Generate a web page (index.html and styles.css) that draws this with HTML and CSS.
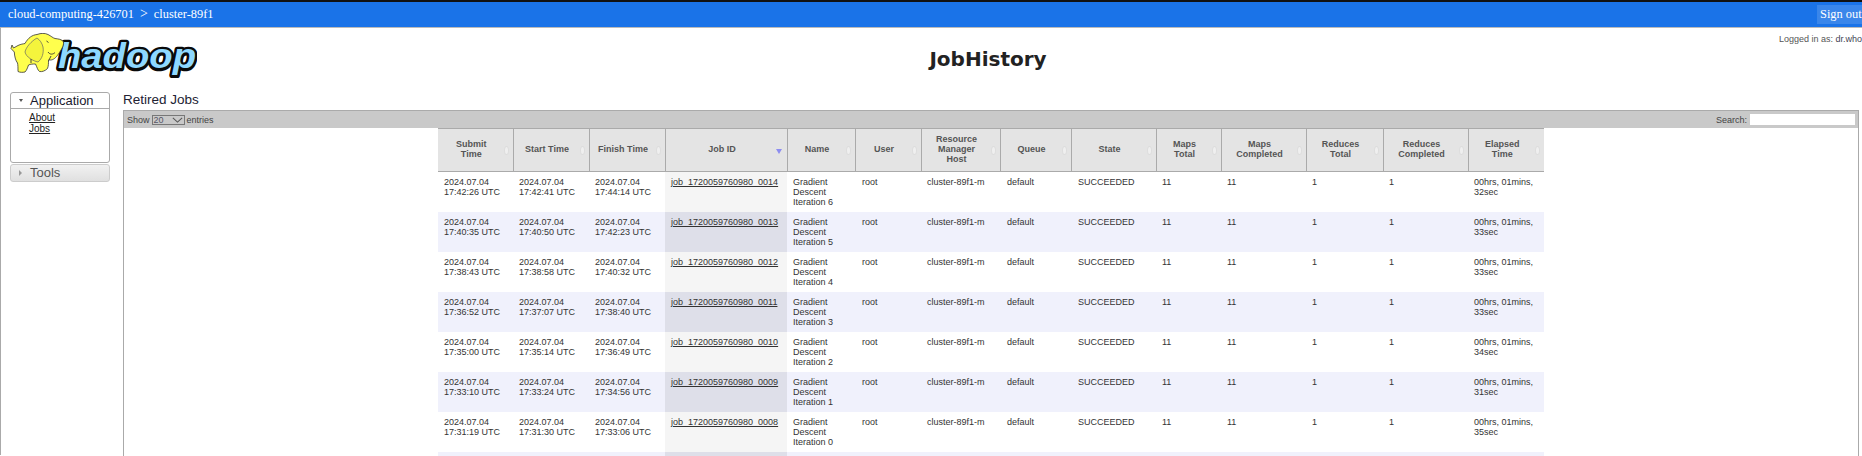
FILE: index.html
```html
<!DOCTYPE html>
<html lang="en">
<head>
<meta charset="utf-8">
<title>JobHistory</title>
<link rel="stylesheet" href="styles.css">
</head>
<body>
<div class="topstrip"></div>
<nav class="topbar">
  <div class="crumbs"><span>cloud-computing-426701</span><span class="sep">&gt;</span><span>cluster-89f1</span></div>
  <a class="signout">Sign out</a>
</nav>
<div class="page">
  <header class="header">
    <svg class="logo" viewBox="0 0 187 45" width="187" height="45" aria-label="hadoop">
      <text x="48" y="36" class="wordmark shadow" textLength="138" lengthAdjust="spacingAndGlyphs">hadoop</text>
      <text x="48" y="35" class="wordmark" textLength="138" lengthAdjust="spacingAndGlyphs">hadoop</text>
      <path class="body" d="M2 12 L3.500 15 L8 12.500 C11 11 13 11 15 10.500 C18 5 22 2 27 1.500 C31 0 35 0 38 1.500 C41 3 43 5 45 5.500 C48 6 52 6 53.500 9 C54 13 51 17 48.500 21 C46 24.500 43.500 27 40.500 27 L38.500 27 C38.500 30 38.500 33 37.500 35.500 C35 38 32 39 29.500 38.500 C27.500 37 27 34 25.500 31 C23 31 20.500 31 18.500 32 C17.500 35 16.500 37.500 15 39 C12.500 39.500 10 39.500 8 38.500 C8 35 8 32 7.500 30 C5.500 27.500 4.500 23 4.300 19 L1 15.500 Z"/>
      <path class="ear" d="M27 5 C21.500 8 16 14 15 19 C16 24 23 28 28 29 C32 26 34 20 33 14 C32 10 30 7 27 5 Z"/>
      <path class="detail" d="M36.500 8 L38.500 9.500 M38 19 C40 22 43 21.500 45 19.500 M39 27 L41 23 M21 30 L21 26"/>
    </svg>
    <h1 class="title">JobHistory</h1>
    <div class="user">Logged in as: <a>dr.who</a></div>
  </header>
  <div class="columns">
    <aside class="side">
      <section class="panel open">
        <h3 class="panel-head"><span class="arrow-down"></span>Application</h3>
        <ul class="panel-body">
          <li><a>About</a></li>
          <li><a>Jobs</a></li>
        </ul>
      </section>
      <section class="panel closed">
        <h3 class="panel-head"><span class="arrow-right"></span>Tools</h3>
      </section>
    </aside>
    <main class="main">
      <h2 class="heading">Retired Jobs</h2>
      <div class="wrapper">
        <div class="toolbar">
          <label class="length">Show <span class="select">20<svg width="13" height="7" viewBox="0 0 13 7"><path d="M1 1 L6.500 6 L12 1" /></svg></span> entries</label>
          <label class="search">Search: <span class="searchbox"></span></label>
        </div>
        <table class="jobs">
          <colgroup>
            <col class="c1"><col class="c2"><col class="c3"><col class="c4"><col class="c5"><col class="c6"><col class="c7"><col class="c8"><col class="c9"><col class="c10"><col class="c11"><col class="c12"><col class="c13"><col class="c14">
          </colgroup>
          <thead>
            <tr>
              <th><span class="th">Submit<br>Time</span><i class="sort"></i></th>
              <th><span class="th">Start Time</span><i class="sort"></i></th>
              <th><span class="th">Finish Time</span><i class="sort"></i></th>
              <th><span class="th">Job ID</span><i class="sort-desc"></i></th>
              <th><span class="th">Name</span><i class="sort"></i></th>
              <th><span class="th">User</span><i class="sort"></i></th>
              <th><span class="th">Resource<br>Manager<br>Host</span><i class="sort"></i></th>
              <th><span class="th">Queue</span><i class="sort"></i></th>
              <th><span class="th">State</span><i class="sort"></i></th>
              <th><span class="th">Maps<br>Total</span><i class="sort"></i></th>
              <th><span class="th">Maps<br>Completed</span><i class="sort"></i></th>
              <th><span class="th">Reduces<br>Total</span><i class="sort"></i></th>
              <th><span class="th">Reduces<br>Completed</span><i class="sort"></i></th>
              <th><span class="th">Elapsed<br>Time</span><i class="sort"></i></th>
            </tr>
          </thead>
          <tbody>
            <tr><td>2024.07.04 17:42:26 UTC</td><td>2024.07.04 17:42:41 UTC</td><td>2024.07.04 17:44:14 UTC</td><td class="sorted"><a>job_1720059760980_0014</a></td><td>Gradient Descent Iteration 6</td><td>root</td><td>cluster-89f1-m</td><td>default</td><td>SUCCEEDED</td><td>11</td><td>11</td><td>1</td><td>1</td><td>00hrs, 01mins, 32sec</td></tr>
            <tr><td>2024.07.04 17:40:35 UTC</td><td>2024.07.04 17:40:50 UTC</td><td>2024.07.04 17:42:23 UTC</td><td class="sorted"><a>job_1720059760980_0013</a></td><td>Gradient Descent Iteration 5</td><td>root</td><td>cluster-89f1-m</td><td>default</td><td>SUCCEEDED</td><td>11</td><td>11</td><td>1</td><td>1</td><td>00hrs, 01mins, 33sec</td></tr>
            <tr><td>2024.07.04 17:38:43 UTC</td><td>2024.07.04 17:38:58 UTC</td><td>2024.07.04 17:40:32 UTC</td><td class="sorted"><a>job_1720059760980_0012</a></td><td>Gradient Descent Iteration 4</td><td>root</td><td>cluster-89f1-m</td><td>default</td><td>SUCCEEDED</td><td>11</td><td>11</td><td>1</td><td>1</td><td>00hrs, 01mins, 33sec</td></tr>
            <tr><td>2024.07.04 17:36:52 UTC</td><td>2024.07.04 17:37:07 UTC</td><td>2024.07.04 17:38:40 UTC</td><td class="sorted"><a>job_1720059760980_0011</a></td><td>Gradient Descent Iteration 3</td><td>root</td><td>cluster-89f1-m</td><td>default</td><td>SUCCEEDED</td><td>11</td><td>11</td><td>1</td><td>1</td><td>00hrs, 01mins, 33sec</td></tr>
            <tr><td>2024.07.04 17:35:00 UTC</td><td>2024.07.04 17:35:14 UTC</td><td>2024.07.04 17:36:49 UTC</td><td class="sorted"><a>job_1720059760980_0010</a></td><td>Gradient Descent Iteration 2</td><td>root</td><td>cluster-89f1-m</td><td>default</td><td>SUCCEEDED</td><td>11</td><td>11</td><td>1</td><td>1</td><td>00hrs, 01mins, 34sec</td></tr>
            <tr><td>2024.07.04 17:33:10 UTC</td><td>2024.07.04 17:33:24 UTC</td><td>2024.07.04 17:34:56 UTC</td><td class="sorted"><a>job_1720059760980_0009</a></td><td>Gradient Descent Iteration 1</td><td>root</td><td>cluster-89f1-m</td><td>default</td><td>SUCCEEDED</td><td>11</td><td>11</td><td>1</td><td>1</td><td>00hrs, 01mins, 31sec</td></tr>
            <tr><td>2024.07.04 17:31:19 UTC</td><td>2024.07.04 17:31:30 UTC</td><td>2024.07.04 17:33:06 UTC</td><td class="sorted"><a>job_1720059760980_0008</a></td><td>Gradient Descent Iteration 0</td><td>root</td><td>cluster-89f1-m</td><td>default</td><td>SUCCEEDED</td><td>11</td><td>11</td><td>1</td><td>1</td><td>00hrs, 01mins, 35sec</td></tr>
            <tr><td></td><td></td><td></td><td class="sorted"></td><td></td><td></td><td></td><td></td><td></td><td></td><td></td><td></td><td></td><td></td></tr>
          </tbody>
        </table>
      </div>
    </main>
  </div>
</div>
</body>
</html>
```
FILE: styles.css
```css
* { box-sizing: border-box; }
html, body { margin: 0; padding: 0; height: 456px; overflow: hidden; background: #fff; }
body { font-family: "Liberation Sans", Arial, sans-serif; font-size: 9px; color: #333; }
a { color: inherit; text-decoration: underline; }

.topstrip { height: 2px; background: #111; }
.topbar { height: 25px; background: #1a73e8; display: flex; align-items: center; justify-content: space-between; padding: 0 0 0 8px; font-family: "Liberation Serif", "Times New Roman", serif; color: #fff; font-size: 12.400px; }
.crumbs { display: flex; gap: 6px; align-items: center; }
.crumbs .sep { font-size: 14px; line-height: 14px; padding-bottom: 2px; }
.signout { background: #3a86ea; width: 45px; height: 19px; line-height: 19px; padding-left: 3px; white-space: nowrap; text-decoration: none; }

.page { border-left: 1px solid #aaa; border-top: 1px solid #bbb; height: 428px; }
.header { display: flex; height: 63px; align-items: flex-start; }
.logo { margin: 5px 0 0 9px; flex: none; }
.logo .body { fill: #ffff4d; stroke: #333; stroke-width: 0.8; }
.logo .ear { fill: #f4f43c; stroke: #666; stroke-width: 0.7; }
.logo .detail { fill: none; stroke: #333; stroke-width: 0.9; }
.wordmark { font-family: "Liberation Sans", Arial, sans-serif; font-style: italic; font-weight: 700; font-size: 35px; fill: #8ed8ff; stroke: #0a0a0a; stroke-width: 4.500px; stroke-linejoin: round; paint-order: stroke; }
.shadow { fill: #0a0a0a; }
.title { flex: 1; margin: 18px 0 0; text-align: center; font-family: "DejaVu Sans", Verdana, sans-serif; font-size: 20px; line-height: 26px; font-weight: 700; color: #222; }
.user { width: 83px; margin-top: 6px; color: #555; font-size: 9px; white-space: nowrap; line-height: 10px; }
.user a { text-decoration: none; color: #445; }

.columns { display: flex; }
.side { width: 122px; flex: none; padding: 1px 0 0 9px; }
.panel { width: 100px; border: 1px solid #aaa; border-radius: 3px; }
.panel-head { margin: 0; height: 16px; font-size: 13px; font-weight: 400; line-height: 16px; display: flex; align-items: center; padding-left: 8px; }
.open { height: 71px; margin-bottom: 1px; color: #223; }
.open .panel-head { border-bottom: 1px solid #aaa; color: #1a1a2e; }
.closed { height: 18px; background: linear-gradient(#f1f1f1, #e0e0e0); border-color: #ccc; color: #555; }
.arrow-down { width: 0; height: 0; margin-right: 7px; border: 2.500px solid transparent; border-top: 3px solid #555; border-bottom: 0; }
.arrow-right { width: 0; height: 0; margin-right: 8px; border: 3px solid transparent; border-left: 3px solid #999; border-right: 0; }
.panel-body { list-style: none; margin: 0; padding: 3px 0 0 18px; font-size: 10px; line-height: 11px; color: #222; }

.main { flex: 1; min-width: 0; padding-right: 3px; }
.heading { margin: 0; height: 19px; padding-top: 1px; font-size: 13.500px; font-weight: 400; line-height: 15px; color: #223; }
.wrapper { border: 1px solid #aaa; border-bottom: 0; height: 400px; overflow: hidden; }
.toolbar { height: 17px; background: #c9c9c9; display: flex; justify-content: space-between; align-items: center; padding: 0 3px; color: #444; font-size: 9px; }
.length { display: flex; align-items: center; gap: 2px; }
.select { width: 33px; height: 10px; border: 1px solid #777; color: #556; display: flex; justify-content: space-between; align-items: center; font-size: 9px; padding: 0 1px; line-height: 8px; }
.select svg { width: 11px; height: 6px; }
.select path { fill: none; stroke: #555; stroke-width: 1.200; }
.search { display: flex; align-items: center; gap: 3px; }
.searchbox { width: 105px; height: 11px; background: #fff; }

.jobs { table-layout: fixed; width: 1106px; border-collapse: collapse; margin-left: 314px; }
.c1 { width: 75px; } .c2 { width: 76px; } .c3 { width: 76px; } .c4 { width: 122px; }
.c5 { width: 68px; } .c6 { width: 66px; } .c7 { width: 79px; } .c8 { width: 71px; }
.c9 { width: 85px; } .c10 { width: 65px; } .c11 { width: 85px; } .c12 { width: 77px; }
.c13 { width: 85px; } .c14 { width: 76px; }
.jobs th { position: relative; height: 43px; padding: 0 8px 2px 0; background: #e4e4e4; border-top: 1px solid #aaa; border-bottom: 1px solid #aaa; border-right: 1px solid #aaa; font-size: 9px; line-height: 10px; font-weight: 700; color: #555; text-align: center; vertical-align: middle; }
.jobs th:last-child { border-right: 0; }
.sort, .sort-desc { position: absolute; right: 4px; top: 17px; }
.sort { width: 5px; height: 9px; border-radius: 50%; background: #efefef; border: 1px solid #ddd; }
.sort-desc { top: 20px; right: 5px; width: 0; height: 0; border: 3px solid transparent; border-top: 5px solid #8d8df0; border-bottom: 0; }
.jobs td { height: 40px; padding: 5px 6px; font-size: 9px; line-height: 10px; vertical-align: top; color: #333; background: #fff; }
.jobs td:nth-child(6), .jobs td:nth-child(8), .jobs td:nth-child(9) { padding-left: 7px; }
.jobs tbody tr:nth-child(even) td { background: #f0f1fc; }
.jobs td.sorted { background: #f5f5f5; }
.jobs tbody tr:nth-child(even) td.sorted { background: #dedfe9; }
```
